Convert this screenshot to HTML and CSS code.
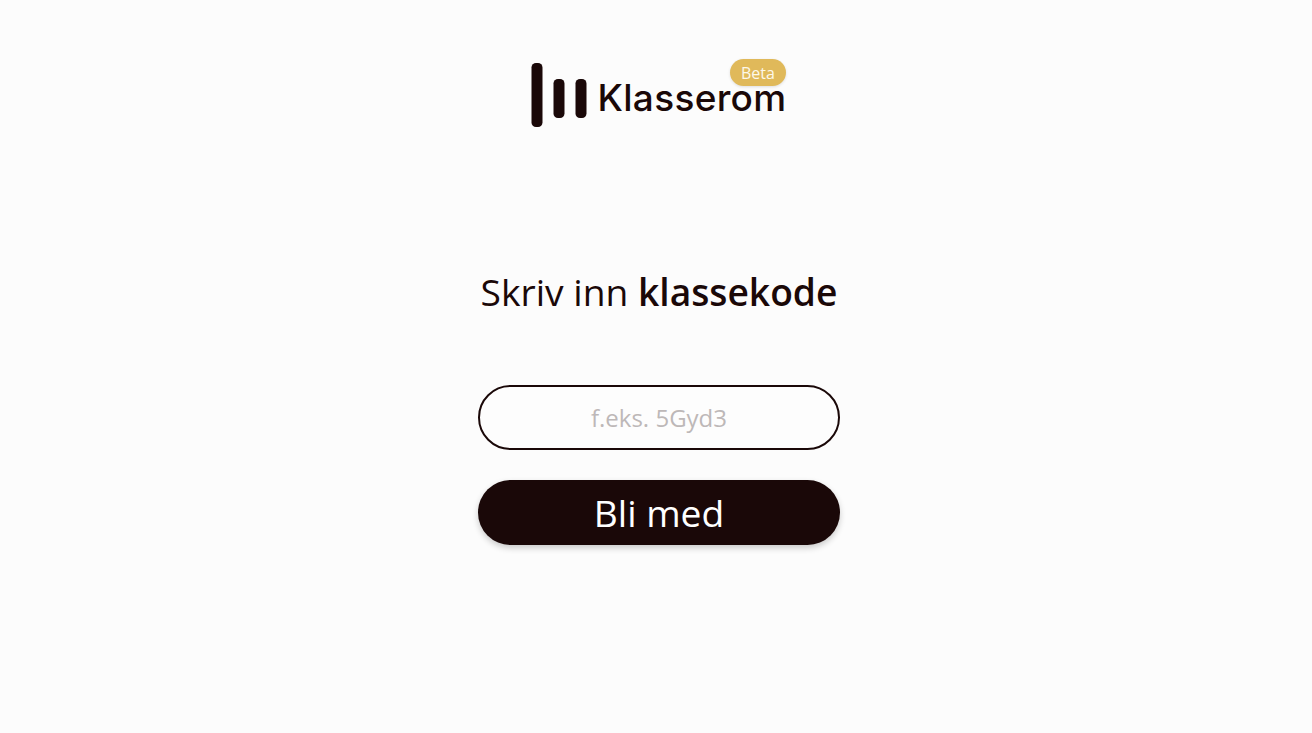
FILE: index.html
```html
<!DOCTYPE html>
<html>
<head>
    <link rel="stylesheet" href="styles.css">
</head>

<body>
    <div class="page">
        <div class="logo">
            <svg class="logo-mark" width="56" height="64" viewBox="0 0 56 64">
                <rect x="0.5" y="0" width="11" height="64" rx="4.5" fill="#1a0808"></rect>
                <rect x="22.5" y="16" width="11" height="39" rx="4.5" fill="#1a0808"></rect>
                <rect x="44.5" y="16" width="11" height="39" rx="4.5" fill="#1a0808"></rect>
            </svg>
            <span class="logo-text">Klasserom</span>
            <span class="beta">Beta</span>
        </div>

        <h1 class="title">Skriv inn <b>klassekode</b></h1>

        <input class="code-input" type="text" placeholder="f.eks. 5Gyd3">
        <button class="join-button">Bli med</button>
    </div>
</body>
</html>
```

FILE: styles.css
```css
body, html {
height: 100%;
margin: 0;
padding: 0;
}

body {
background-color: #fcfcfc;
color: #1a0808;
font-family: "Open Sans", "Noto Sans", sans-serif;
}

.page {
display: flex;
flex-direction: column;
align-items: center;
padding-top: 63px;
padding-left: 6px;
}

.logo {
position: relative;
display: flex;
width: 255px;
height: 64px;
margin-left: -1px;
}

.logo-mark {
flex: none;
}

.logo-text {
margin-left: 10.5px;
margin-top: 23px;
font-family: "Inter", sans-serif;
font-size: 37px;
font-weight: 500;
line-height: 24px;
letter-spacing: 0.3px;
white-space: nowrap;
}

.beta {
position: absolute;
top: -4px;
right: 0;
width: 56px;
height: 27px;
border-radius: 14px;
background-color: #e0b95a;
box-shadow: 0 1px 3px rgba(0, 0, 0, 0.12);
color: #fdf8ea;
font-size: 16px;
line-height: 28px;
text-align: center;
}

.title {
margin: 140px 0 69px 0;
font-size: 37.2px;
font-weight: 400;
line-height: 49px;
white-space: nowrap;
}

.title b {
font-weight: 600;
}

.code-input {
box-sizing: border-box;
width: 362px;
height: 65px;
padding: 0 24px;
border: 2px solid #1a0808;
border-radius: 33px;
background-color: #fdfdfd;
color: #1a0808;
font-family: "Open Sans", "Noto Sans", sans-serif;
font-size: 24px;
text-align: center;
outline: none;
}

.code-input::placeholder {
color: #bdb8b8;
opacity: 1;
}

.join-button {
width: 362px;
height: 65px;
margin-top: 30px;
border: none;
border-radius: 33px;
background-color: #1a0808;
box-shadow: 0 3px 6px rgba(0, 0, 0, 0.2);
color: #fff;
font-family: "Open Sans", "Noto Sans", sans-serif;
font-size: 37.2px;
}
```
